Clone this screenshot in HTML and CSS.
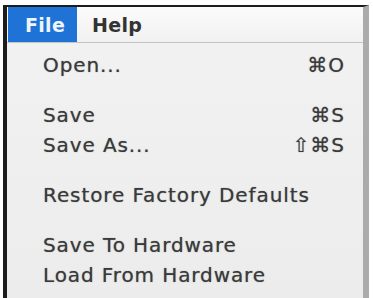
FILE: index.html
```html
<!DOCTYPE html>
<html>
<head>
<meta charset="utf-8">
<link rel="stylesheet" href="styles.css">
</head>
<body>
<div class="frame">
  <div class="menubar">
    <span class="title active">File</span>
    <span class="title">Help</span>
  </div>
  <div class="menu">
    <div class="item"><span>Open...</span><span class="key">⌘O</span></div>
    <div class="gap"></div>
    <div class="item"><span>Save</span><span class="key">⌘S</span></div>
    <div class="item"><span>Save As...</span><span class="key">⇧⌘S</span></div>
    <div class="gap"></div>
    <div class="item"><span>Restore Factory Defaults</span></div>
    <div class="gap"></div>
    <div class="item"><span>Save To Hardware</span></div>
    <div class="item"><span>Load From Hardware</span></div>
  </div>
</div>
</body>
</html>
```
FILE: styles.css
```css
html, body {
  margin: 0;
  padding: 0;
  background: #ffffff;
}
.frame {
  margin: 5px 0 0 3px;
  width: 366px;
  height: 293px;
  border-top: 2px solid #1c1c1c;
  border-left: 4px solid #1c1c1c;
  border-right: 6px solid #ababab;
  background: linear-gradient(#f2f2f2, #ececec);
  font-family: "DejaVu Sans", sans-serif;
  font-size: 20px;
  color: #3a3a3a;
  box-sizing: border-box;
  overflow: hidden;
}
.menubar {
  display: flex;
  height: 36px;
  background: linear-gradient(#fbfbfb, #f1f1f1);
  border-bottom: 1px solid #c4c4c4;
  padding-left: 1px;
  box-sizing: border-box;
}
.title {
  display: flex;
  align-items: center;
  padding: 0 0 0 15px;
  font-weight: bold;
  font-size: 19px;
  color: #333333;
  letter-spacing: 0.3px;
}
.title.active {
  background: #1f72d6;
  color: #eef5ff;
  width: 69px;
  padding-left: 17px;
  box-sizing: border-box;
}
.menu {
  padding-top: 7px;
}
.item {
  display: flex;
  justify-content: space-between;
  height: 30px;
  line-height: 30px;
  padding: 0 18px 0 36px;
  letter-spacing: 0.9px;
  text-shadow: 0 0 1px rgba(40, 40, 40, 0.55);
}
.key {
  letter-spacing: 1px;
}
.gap {
  height: 20px;
}
```
